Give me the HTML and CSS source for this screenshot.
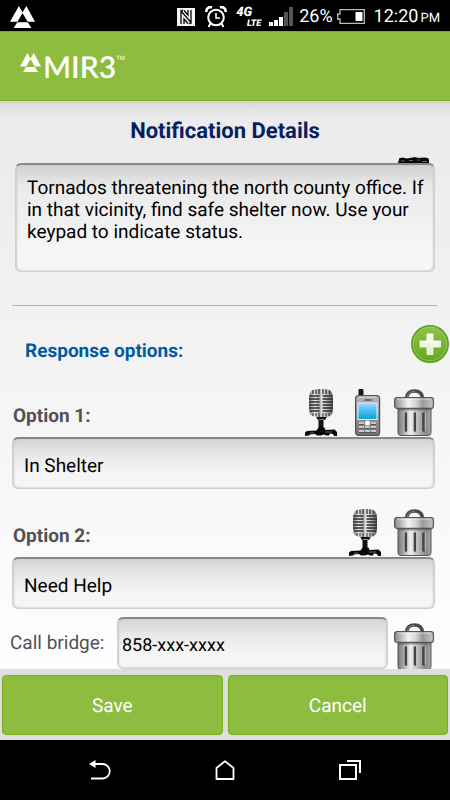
FILE: index.html
```html
<!DOCTYPE html>
<html lang="en">
<head>
<meta charset="utf-8">
<meta name="viewport" content="width=device-width, initial-scale=1">
<title>Notification Details</title>
<link rel="stylesheet" href="styles.css">
</head>
<body>
<svg class="sprite" width="0" height="0" aria-hidden="true">
  <defs>
    <linearGradient id="steel" x1="0" x2="1" y1="0" y2="0">
      <stop offset="0" stop-color="#777"/><stop offset=".12" stop-color="#999"/><stop offset=".38" stop-color="#eee"/><stop offset=".6" stop-color="#bbb"/><stop offset=".85" stop-color="#888"/><stop offset="1" stop-color="#aaa"/>
    </linearGradient>
    <linearGradient id="lid" x1="0" x2="1" y1="0" y2="0">
      <stop offset="0" stop-color="#8a8a8a"/><stop offset=".35" stop-color="#f2f2f2"/><stop offset=".55" stop-color="#d6d6d6"/><stop offset=".72" stop-color="#999"/><stop offset="1" stop-color="#c8c8c8"/>
    </linearGradient>
    <linearGradient id="chrome" x1="0" x2="1" y1="0" y2="0">
      <stop offset="0" stop-color="#777"/><stop offset=".25" stop-color="#eee"/><stop offset=".45" stop-color="#aaa"/><stop offset=".55" stop-color="#eee"/><stop offset=".8" stop-color="#aaa"/><stop offset="1" stop-color="#555"/>
    </linearGradient>
    <linearGradient id="screen" x1="0" x2="0" y1="0" y2="1">
      <stop offset="0" stop-color="#9ddcf8"/><stop offset=".45" stop-color="#4cc0f2"/><stop offset="1" stop-color="#0a9fe0"/>
    </linearGradient>
    <linearGradient id="case" x1="0" x2="0" y1="0" y2="1">
      <stop offset="0" stop-color="#b5b5b5"/><stop offset="1" stop-color="#777"/>
    </linearGradient>
    <linearGradient id="leaf" x1="0" x2="0" y1="0" y2="1">
      <stop offset="0" stop-color="#8cc44c"/><stop offset="1" stop-color="#64a71f"/>
    </linearGradient>
    <linearGradient id="cross" x1="0" x2="0" y1="0" y2="1">
      <stop offset="0" stop-color="#fff"/><stop offset="1" stop-color="#dfeecb"/>
    </linearGradient>
  </defs>
  <symbol id="i-trash" viewBox="0 0 40 47">
    <path d="M12.500 9C13 4 16 2 20.500 2s7.500 2 8 7" fill="none" stroke="#484848" stroke-width="3.600"/>
    <path d="M13 8c1-4 3.500-5.500 7.500-5.500" fill="none" stroke="#888" stroke-width="1"/>
    <path d="M4 19h33v24.500a3 3 0 0 1-3 3H7a3 3 0 0 1-3-3z" fill="url(#steel)" stroke="#555"/>
    <path d="M4.500 19.500h32v2h-32z" fill="#555" opacity=".55"/>
    <rect x=".6" y="8.600" width="38.800" height="10.800" rx="2.500" fill="url(#lid)" stroke="#555" stroke-width="1.200"/>
    <path d="M3 10h34" stroke="#fff" opacity=".6"/>
    <path d="M12 24.500v17M21 24.500v17M29.500 24.500v17" stroke="#444" stroke-width="2.600" stroke-linecap="round"/>
    <path d="M13.800 24v17.500M22.800 24v17.500M31.300 24v17.500" stroke="#ddd" stroke-width=".7"/>
  </symbol>
  <symbol id="i-mic" viewBox="0 0 32 47">
    <path d="M10 26h13l-3 5h-1.500v10h-5V31H13z" fill="#111"/>
    <path d="M4 10Q4 0 11 0h10q7 0 7 10v10q0 8-7 8H11q-7 0-7-8z" fill="url(#chrome)"/>
    <path d="M8 1v4M11 .5V5M14 0v5M18 0v5M21 .5V5M24.500 1.500V5" stroke="#333" stroke-width="1.300"/>
    <path d="M4.500 7h10M17.500 7h10M4 10h10.500M17.500 10H28M4 13h10.500M17.500 13H28M4 16h10.500M17.500 16H28M4 19h10.500M17.500 19H28M5 22h9.500M17.500 22H27" stroke="#2b2b2b" stroke-width="1.400"/>
    <path d="M8 24v3M11 24v3.500M14 24v4M18 24v4M21 24v3.500M24 24v3" stroke="#444" stroke-width="1.200"/>
    <path d="M14 30.500h5" stroke="#888" stroke-width="1"/>
    <path d="M0 47v-3.500L2 42l9.500-.5 2-3h6l1 2.500 9-.5 2.500 2.500v4h-3l-1-2-3-.5-1 2h-3l-2-1-3 1h-4l-2-1.500-5 .5-1 1z" fill="#080808"/>
    <path d="M20 43h7M5 44h4" stroke="#666"/>
  </symbol>
  <symbol id="i-phone" viewBox="0 0 26 47">
    <rect x="3.500" y="0" width="5" height="9" rx="1" fill="#181818"/>
    <rect x=".6" y="6.600" width="24" height="39.800" rx="3" fill="url(#case)" stroke="#505050" stroke-width="1.200"/>
    <path d="M3.500 8h18" stroke="#ddd"/>
    <path d="M9.500 11h7" stroke="#444" stroke-width="1.300"/>
    <rect x="3" y="14" width="19" height="16.500" fill="url(#screen)" stroke="#e4f5fc"/>
    <circle cx="12.500" cy="34" r="2.500" fill="#fff"/>
    <path d="M4 34.500h5M16 34.500h5M4 38.500h5M10 38.500h5M16 38.500h5M4 42.500h5M10 42.500h5M16 42.500h5" stroke="#555" stroke-width="3"/>
    <path d="M4 34h5M16 34h5M4 38h5M10 38h5M16 38h5M4 42h5M10 42h5M16 42h5" stroke="#f0f0f0" stroke-width="1.700"/>
  </symbol>
  <symbol id="i-plus" viewBox="0 0 38 38">
    <circle cx="19" cy="19" r="18.200" fill="url(#leaf)" stroke="#5c9d1d" stroke-width="1.500"/>
    <circle cx="19" cy="19" r="16.700" fill="none" stroke="#a5d66c" stroke-width="1" opacity=".6"/>
    <path d="M15.500 9.500q0-1 1-1h5q1 0 1 1v6h6.500q1 0 1 1v5q0 1-1 1h-6.500V29q0 1-1 1h-5q-1 0-1-1v-6.500H9.500q-1 0-1-1v-5q0-1 1-1h6z" fill="url(#cross)"/>
  </symbol>
  <symbol id="i-brand" viewBox="0 0 24 22" preserveAspectRatio="none">
    <path d="M8.500 0 12.200 6.800 7.200 15.700H0zM15.700 0 24 15.700h-7L11.800 6.800zM7 16.300h10l3.500 5.700h-17z" fill="#fff"/>
  </symbol>
</svg>

<div class="screen">
  <div class="status">
    <svg class="status-brand" aria-hidden="true"><use href="#i-brand"/></svg>
    <svg width="18" height="18" viewBox="0 0 18 18" aria-hidden="true"><path d="M0 0h18v18H0z" fill="#f5f5f5"/><path d="M4 16V3l10 11.500V2M4 3.500l2-1.500M14 14.500 12 16M7 2.500l4 4.500V2M7 16v-5l4 4.500" fill="none" stroke="#000" stroke-width="1.300"/></svg>
    <svg class="status-alarm" width="22" height="22" viewBox="0 0 22 22" fill="none" stroke="#fff" aria-hidden="true"><circle cx="11" cy="11.500" r="7.800" stroke-width="2"/><path d="M11 7v5h4" stroke-width="1.600"/><path d="M1.500 6A4 4 0 0 1 7 1.500M20.500 6A4 4 0 0 0 15 1.500" stroke-width="2.600"/><path d="M5.500 17.500l-2 3.500M16.500 17.500l2 3.500" stroke-width="2"/></svg>
    <span class="network"><b>4G</b><small>LTE</small></span>
    <svg class="status-signal" width="24" height="19" viewBox="0 0 24 19" aria-hidden="true"><path d="M0 15h4v4H0zM5 13h4v6H5zM10 10h4v9h-4z" fill="#fff"/><path d="M15 5h4v14h-4zM20 0h4v19h-4z" fill="#555"/></svg>
    <span class="battery-level">26%</span>
    <svg class="status-battery" width="28" height="15" viewBox="0 0 28 15" aria-hidden="true"><path d="M3 .7h24.300v13.600H3V10H.7V5H3z" fill="none" stroke="#bbb" stroke-width="1.300"/><path d="M18.500 3h7v9h-7z" fill="#fff"/></svg>
    <span class="clock">12:20<small>PM</small></span>
  </div>

  <header class="header">
    <svg class="header-brand" aria-hidden="true"><use href="#i-brand"/></svg>
    <span class="wordmark">MIR3</span><span class="trade">TM</span>
  </header>

  <main class="main">
    <h1>Notification Details</h1>
    <div class="message">
      <svg class="message-mic" viewBox="0 0 32 7" aria-hidden="true"><path d="M0 7V5l1-2V1.500L4 .5l5 1L15 .5l1-.5 5 1 5-.5 4 .5 1 2v4z" fill="#080808"/><path d="M3 4h4M11 3.500h4M19 3h3M24 4.500h5" stroke="#666"/></svg>
      <textarea aria-label="Message" rows="4">Tornados threatening the north county office. If in that vicinity, find safe shelter now. Use your keypad to indicate status.</textarea>
    </div>
    <hr>
    <div class="section">
      <h2>Response options:</h2>
      <button class="icon-button" type="button" aria-label="Add option"><svg class="icon-plus"><use href="#i-plus"/></svg></button>
    </div>

    <div class="option">
      <div class="option-head">
        <label for="option1">Option 1:</label>
        <button class="icon-button" type="button" aria-label="Record option 1"><svg class="icon-mic"><use href="#i-mic"/></svg></button>
        <button class="icon-button after-mic" type="button" aria-label="Call option 1"><svg class="icon-phone"><use href="#i-phone"/></svg></button>
        <button class="icon-button before-trash" type="button" aria-label="Delete option 1"><svg class="icon-trash"><use href="#i-trash"/></svg></button>
      </div>
      <input id="option1" type="text" value="In Shelter">
    </div>

    <div class="option">
      <div class="option-head">
        <label for="option2">Option 2:</label>
        <button class="icon-button" type="button" aria-label="Record option 2"><svg class="icon-mic"><use href="#i-mic"/></svg></button>
        <button class="icon-button before-trash" type="button" aria-label="Delete option 2"><svg class="icon-trash"><use href="#i-trash"/></svg></button>
      </div>
      <input id="option2" type="text" value="Need Help">
    </div>

    <div class="bridge">
      <label for="bridge">Call bridge:</label>
      <input id="bridge" type="text" value="858-xxx-xxxx">
      <button class="icon-button" type="button" aria-label="Delete call bridge"><svg class="icon-trash"><use href="#i-trash"/></svg></button>
    </div>
  </main>

  <footer class="actions">
    <button type="button">Save</button>
    <button type="button">Cancel</button>
  </footer>

  <nav class="system" aria-label="System">
    <button type="button" aria-label="Back"><svg viewBox="0 0 22 20" fill="none" stroke="#fff" stroke-width="1.800"><path d="M5 4h8.500a7.200 7.200 0 0 1 0 14.500H2"/><path d="M0 4 6.500 0v8z" fill="#fff" stroke="none"/></svg></button>
    <button type="button" aria-label="Home"><svg viewBox="0 0 22 20" fill="none" stroke="#fff" stroke-width="1.800" stroke-linejoin="round"><path d="M2.500 8 11 1.200 19.500 8v11h-17z"/></svg></button>
    <button type="button" aria-label="Recent apps"><svg viewBox="0 0 22 20" fill="none" stroke="#fff" stroke-width="2"><path d="M1 5h16v14H1z"/><path d="M8 1h13v12" stroke-width="2.200"/></svg></button>
  </nav>
</div>
</body>
</html>
```

FILE: styles.css
```css
* {
  box-sizing: border-box;
}

body {
  margin: 0;
  background: #000;
  font-family: Roboto, "Liberation Sans", sans-serif;
  font-size: 19px;
  text-rendering: geometricPrecision;
  color: #000;
}

.sprite {
  position: absolute;
}

svg {
  display: block;
  flex: none;
}

button,
input,
textarea {
  font: inherit;
  text-rendering: inherit;
  margin: 0;
}

.screen {
  display: flex;
  flex-direction: column;
  height: 100vh;
}

/* Status bar */
.status {
  display: flex;
  flex: none;
  align-items: center;
  height: 31px;
  padding: 2px 10px 0;
  background: #000;
  color: #fff;
  font-size: 18px;
}

.status-brand {
  width: 25px;
  height: 22px;
  margin-right: auto;
}

.status-alarm {
  margin-left: 10px;
}

.network {
  display: flex;
  flex-direction: column;
  align-items: flex-end;
  width: 25px;
  margin: 1px 0 0 9px;
  font-style: italic;
  font-weight: 900;
}

.network b {
  align-self: flex-start;
  font-size: 13px;
  line-height: 13px;
}

.network small {
  font-size: 9px;
  line-height: 10px;
}

.status-signal {
  margin-left: 8px;
}

.battery-level {
  margin-left: 6px;
}

.status-battery {
  margin-left: 4px;
}

.clock {
  display: flex;
  align-items: baseline;
  gap: 2px;
  margin-left: 9px;
}

.clock small {
  font-size: 13px;
}

/* Header */
.header {
  display: flex;
  flex: none;
  align-items: center;
  height: 70px;
  padding: 2px 0 0 20px;
  border-top: 1px solid #7cad27;
  border-bottom: 1px solid #7cad27;
  background: #8dbc3f;
  color: #fff;
}

.header-brand {
  width: 21px;
  height: 19px;
  margin: 0 2px 9px 0;
}

.wordmark {
  font: 600 30px/40px Lato, sans-serif;
}

.trade {
  margin-bottom: 18px;
  font-size: 6px;
}

/* Form */
.main {
  flex: 1;
  min-height: 0;
  overflow-y: auto;
  scrollbar-width: none;
  padding: 17px 15px 0 12px;
  background: linear-gradient(#cfcfcf, #ddd 4px, #ebebeb 16px, #ececec 60px, #fefefe);
}

h1 {
  margin: 0 0 0 3px;
  font-size: 22px;
  line-height: 28px;
  text-align: center;
  color: #051f60;
}

input,
textarea {
  display: block;
  width: 100%;
  border: 1px solid #cfcfcf;
  border-top: 2px solid #888;
  border-radius: 6px;
  background: linear-gradient(#d5d5d5, #eaeaea 35%, #f5f5f5 70%);
  box-shadow: inset 1px 0 2px #ccc, inset -1px 0 2px #ccc;
  color: #000;
}

input {
  height: 52px;
  padding: 4px 11px 0;
}

textarea {
  position: relative;
  height: 109px;
  padding: 12px 4px 11px 11px;
  overflow: hidden;
  resize: none;
  background: linear-gradient(#d0d0d0, #eaeaea 20%, #f6f6f6 80%);
  line-height: 22px;
}

.message {
  position: relative;
  margin: 17px 0 33px 3px;
}

.message-mic {
  position: absolute;
  top: -6px;
  right: 5px;
  width: 32px;
  height: 7px;
}

hr {
  height: 1px;
  margin: 0 -2px 0 0;
  border: 0;
  background: #b2b4b4;
}

.section {
  display: flex;
  align-items: center;
  justify-content: space-between;
  margin: 19px -14px 26px 13px;
}

h2 {
  margin: 14px 0 0;
  font-size: 19px;
  line-height: 22px;
  color: #005aa3;
}

.icon-button {
  flex: none;
  padding: 0;
  border: 0;
  background: none;
}

.icon-plus {
  width: 38px;
  height: 38px;
}

.icon-mic {
  width: 32px;
  height: 47px;
}

.icon-phone {
  width: 26px;
  height: 47px;
}

.icon-trash {
  width: 40px;
  height: 47px;
}

.option {
  margin-bottom: 20px;
}

.option-head {
  display: flex;
  align-items: center;
  padding: 0 1px 1px;
}

.option-head label {
  margin: 6px auto 0 0;
  font-weight: 700;
  color: #505257;
}

.after-mic {
  margin-left: 18px;
}

.before-trash {
  margin-left: 13px;
}

.bridge {
  display: flex;
  align-items: center;
  margin: -14px 1px 0 -2px;
}

.bridge label {
  flex: none;
  width: 107px;
  color: #505257;
}

.bridge input {
  flex: 1;
  min-width: 0;
  padding: 4px 4px 0;
  font-size: 18px;
}

.bridge .icon-button {
  margin: 8px 0 0 6px;
}

/* Actions */
.actions {
  display: grid;
  grid-template-columns: 1fr 1fr;
  flex: none;
  gap: 5px;
  height: 71px;
  padding: 6px 2px 5px;
  background: #dedede;
}

.actions button {
  border: 1px solid #7cad1c;
  border-radius: 4px;
  background: #8dbc3f;
  color: #fff;
}

/* System navigation */
.system {
  display: grid;
  grid-template-columns: repeat(3, 125px);
  flex: none;
  justify-content: center;
  align-items: center;
  height: 60px;
  background: #000;
}

.system button {
  display: flex;
  justify-content: center;
  padding: 0;
  border: 0;
  background: none;
}

.system svg {
  width: 22px;
  height: 20px;
}
```
